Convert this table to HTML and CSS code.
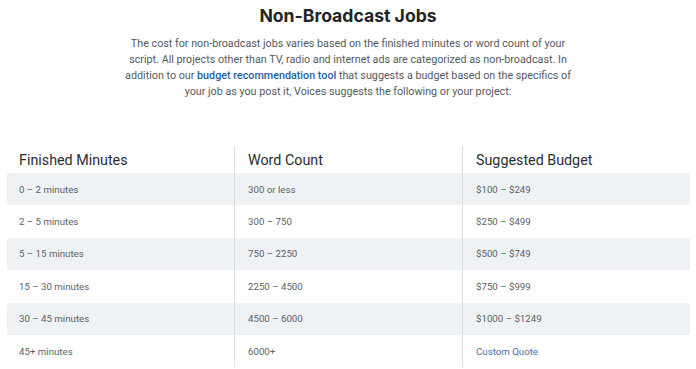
FILE: index.html
```html
<!DOCTYPE html>
<html>
<head>
<meta charset="utf-8">
<link rel="stylesheet" href="styles.css">
</head>
<body>
<div class="page">
  <h2 class="title">Non-Broadcast Jobs</h2>
  <p class="intro">The cost for non-broadcast jobs varies based on the finished minutes or word count of your script. All projects other than TV, radio and internet ads are categorized as non-broadcast. In addition to our <a class="link" href="#">budget recommendation tool</a> that suggests a budget based on the specifics of your job as you post it, Voices suggests the following or your project:</p>
  <div class="table">
    <div class="row head">
      <div class="cell">Finished Minutes</div>
      <div class="cell">Word Count</div>
      <div class="cell">Suggested Budget</div>
    </div>
    <div class="row alt">
      <div class="cell">0 – 2 minutes</div>
      <div class="cell">300 or less</div>
      <div class="cell">$100 – $249</div>
    </div>
    <div class="row">
      <div class="cell">2 – 5 minutes</div>
      <div class="cell">300 – 750</div>
      <div class="cell">$250 – $499</div>
    </div>
    <div class="row alt">
      <div class="cell">5 – 15 minutes</div>
      <div class="cell">750 – 2250</div>
      <div class="cell">$500 – $749</div>
    </div>
    <div class="row">
      <div class="cell">15 – 30 minutes</div>
      <div class="cell">2250 – 4500</div>
      <div class="cell">$750 – $999</div>
    </div>
    <div class="row alt">
      <div class="cell">30 – 45 minutes</div>
      <div class="cell">4500 – 6000</div>
      <div class="cell">$1000 – $1249</div>
    </div>
    <div class="row">
      <div class="cell">45+ minutes</div>
      <div class="cell">6000+</div>
      <div class="cell"><a class="link" href="#">Custom Quote</a></div>
    </div>
  </div>
</div>
</body>
</html>
```
FILE: styles.css
```css
html, body {
  margin: 0;
  padding: 0;
  background: #ffffff;
}
body {
  font-family: Roboto, "Liberation Sans", sans-serif;
  color: #555a60;
}
.page {
  width: 696px;
  height: 369px;
  overflow: hidden;
}
.title {
  margin: 0;
  padding-top: 5px;
  text-align: center;
  font-family: Inter, "DejaVu Sans", sans-serif;
  font-weight: 700;
  font-size: 17.6px;
  line-height: 22px;
  color: #222428;
}
.intro {
  width: 460px;
  margin: 9px auto 0;
  text-align: center;
  font-size: 10.75px;
  line-height: 16px;
  color: #555a60;
}
.link {
  color: #1f5f9e;
  text-decoration: none;
}
.intro .link {
  font-weight: 500;
}
.table {
  margin: 46px 6px 0 7px;
}
.row {
  display: grid;
  grid-template-columns: 227px 228px 228px;
  height: 32.4px;
  border-radius: 2px;
}
.row.head {
  height: 27px;
}
.row.alt {
  background: #eff2f5;
}
.cell {
  display: flex;
  align-items: center;
  padding-left: 13px;
  font-size: 9.7px;
  color: #5a5f66;
  border-left: 1px solid #dadde1;
}
.cell:first-child {
  border-left: none;
  padding-left: 12px;
}
.row.head .cell {
  font-size: 14.3px;
  color: #2a2d31;
}
.row .cell .link {
  color: #3f6fa5;
}
```
